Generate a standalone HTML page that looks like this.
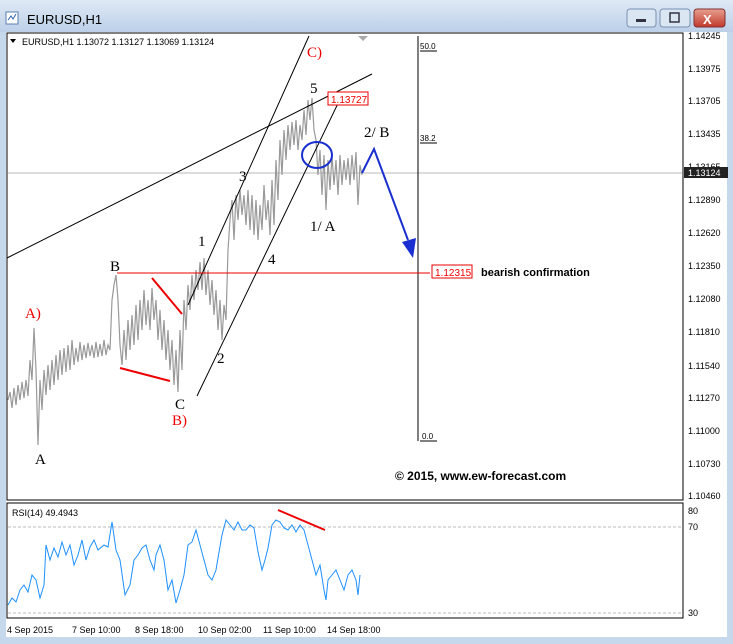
<!DOCTYPE html>
<html><head><meta charset="utf-8"><style>
body{margin:0;width:733px;height:644px;overflow:hidden;background:#c6d8ec;font-family:"Liberation Sans",sans-serif}
svg{display:block}
</style></head><body>
<svg width="733" height="644" xmlns="http://www.w3.org/2000/svg" font-family="Liberation Sans, sans-serif">
<defs><linearGradient id="tb" x1="0" y1="0" x2="0" y2="1"><stop offset="0" stop-color="#dfe9f5"/><stop offset="1" stop-color="#bcd0e8"/></linearGradient>
<linearGradient id="cl" x1="0" y1="0" x2="0" y2="1"><stop offset="0" stop-color="#e8a090"/><stop offset="1" stop-color="#c0392b"/></linearGradient></defs>
<rect x="0" y="0" width="733" height="644" fill="#c6d8ec"/>
<rect x="0" y="0" width="733" height="32" fill="url(#tb)"/>
<rect x="6" y="12" width="12" height="12" fill="#fff" stroke="#5a7fb0"/>
<path d="M8 20l3-4 2 3 3-5" stroke="#3060b0" fill="none"/>
<text x="27" y="24" font-size="13" fill="#000">EURUSD,H1</text>
<rect x="627" y="9" width="29" height="18" rx="3" fill="#dbe6f3" stroke="#7890b0"/>
<rect x="636" y="19" width="10" height="3" fill="#334"/>
<rect x="660" y="9" width="30" height="18" rx="3" fill="#dbe6f3" stroke="#7890b0"/>
<rect x="670" y="13" width="9" height="9" fill="none" stroke="#334" stroke-width="1.5"/>
<rect x="694" y="9" width="31" height="18" rx="3" fill="url(#cl)" stroke="#803030"/>
<text x="703" y="24" font-size="13" font-weight="bold" fill="#fff">X</text>
<rect x="6" y="32" width="721" height="605" fill="#fff"/>
<rect x="7" y="33" width="676" height="467" fill="none" stroke="#000"/>
<rect x="7" y="503" width="676" height="115" fill="none" stroke="#000"/>
<g font-size="9" fill="#000">
<text x="688" y="39">1.14245</text><text x="688" y="72">1.13975</text><text x="688" y="104">1.13705</text><text x="688" y="137">1.13435</text><text x="688" y="170">1.13165</text><text x="688" y="203">1.12890</text><text x="688" y="236">1.12620</text><text x="688" y="269">1.12350</text><text x="688" y="302">1.12080</text><text x="688" y="335">1.11810</text><text x="688" y="369">1.11540</text><text x="688" y="401">1.11270</text><text x="688" y="434">1.11000</text><text x="688" y="467">1.10730</text><text x="688" y="499">1.10460</text>
<text x="688" y="514">80</text><text x="688" y="530">70</text><text x="688" y="616">30</text>
<text x="7" y="633">4 Sep 2015</text><text x="72" y="633">7 Sep 10:00</text><text x="135" y="633">8 Sep 18:00</text><text x="198" y="633">10 Sep 02:00</text><text x="263" y="633">11 Sep 10:00</text><text x="327" y="633">14 Sep 18:00</text>
<text x="12" y="516">RSI(14) 49.4943</text>
<text x="22" y="45">EURUSD,H1  1.13072 1.13127 1.13069 1.13124</text>
</g>
<path d="M10 39l3 4 3-4z" fill="#000"/>
<path d="M358 36l5 5 5-5z" fill="#aaa"/>
<line x1="8" y1="527" x2="682" y2="527" stroke="#bbb" stroke-dasharray="3,2"/>
<line x1="8" y1="613" x2="682" y2="613" stroke="#bbb" stroke-dasharray="3,2"/>
<line x1="8" y1="173" x2="682" y2="173" stroke="#bbb"/>
<rect x="684" y="167" width="44" height="11" fill="#222"/><text x="688" y="176" font-size="9" fill="#fff">1.13124</text>
<line x1="418" y1="36" x2="418" y2="441" stroke="#000"/>
<g font-size="8" fill="#000"><text x="420" y="49">50.0</text><text x="420" y="141">38.2</text><text x="422" y="439">0.0</text></g>
<line x1="420" y1="51" x2="437" y2="51" stroke="#000"/><line x1="420" y1="143" x2="437" y2="143" stroke="#000"/><line x1="420" y1="441" x2="437" y2="441" stroke="#000"/>
<polyline fill="none" stroke="#999" stroke-width="1.2" points="8,400 10,392 12,408 14,388 16,405 18,385 20,400 22,382 24,398 26,380 28,396 30,360 32,380 34,328 36,370 38,445 40,380 42,410 44,370 46,395 48,365 50,390 52,360 54,385 56,355 58,380 60,350 62,375 64,348 66,372 68,345 70,370 72,340 74,365 76,348 78,362 80,342 82,360 84,345 86,358 88,343 90,356 92,345 94,358 96,342 98,357 100,344 102,356 104,340 106,355 108,345 110,350 112,300 114,285 116,275 118,300 120,345 122,365 124,330 126,360 128,320 130,350 132,315 134,345 136,305 138,340 140,300 142,330 144,290 146,325 148,300 150,330 152,288 154,320 156,300 158,340 160,310 162,350 164,320 166,360 168,330 170,370 172,340 174,385 176,350 178,392 180,330 182,370 184,300 186,330 188,285 190,310 192,275 194,300 196,270 198,290 200,262 202,290 204,258 206,295 208,270 210,305 212,280 214,315 216,290 218,330 220,300 222,340 224,305 226,320 228,250 230,220 232,200 234,240 236,195 238,220 240,190 242,215 244,195 246,225 248,190 250,230 252,195 254,235 256,200 258,240 260,205 262,230 264,185 266,220 268,200 270,235 272,180 274,225 276,160 278,200 280,140 282,175 284,130 286,160 288,125 290,150 292,122 294,145 296,120 298,150 300,125 302,140 304,110 306,135 308,100 310,120 312,98 314,130 316,140 318,175 320,150 322,195 324,155 326,210 328,160 330,190 332,155 334,185 336,160 338,195 340,155 342,185 344,160 346,180 348,158 350,185 352,155 354,180 356,152 358,205 360,165 362,175"/>
<line x1="188" y1="305" x2="309" y2="36" stroke="#000"/>
<line x1="197" y1="396" x2="343" y2="93" stroke="#000"/>
<line x1="7" y1="258" x2="372" y2="74" stroke="#000"/>
<line x1="117" y1="273" x2="430" y2="273" stroke="#e00" />
<line x1="152" y1="278" x2="182" y2="314" stroke="#e00" stroke-width="2"/>
<line x1="120" y1="368" x2="170" y2="381" stroke="#e00" stroke-width="2"/>
<rect x="328" y="92" width="40" height="13" fill="#fff" stroke="#e00"/><text x="331" y="103" font-size="10" fill="#e00">1.13727</text>
<rect x="432" y="265" width="40" height="13" fill="#fff" stroke="#e00"/><text x="435" y="276" font-size="10" fill="#e00">1.12315</text>
<text x="481" y="276" font-size="11" font-weight="bold">bearish confirmation</text>
<ellipse cx="317" cy="155" rx="15" ry="13" fill="none" stroke="#1a2fd0" stroke-width="2"/>
<polyline points="362,173 374,149 408,240" fill="none" stroke="#1a2fd0" stroke-width="2"/>
<path d="M402 242l14 -4 -3 20z" fill="#1a2fd0"/>
<g font-family="Liberation Serif, serif" font-size="15">
<text x="307" y="57" fill="#e00">C)</text><text x="310" y="93">5</text><text x="239" y="181">3</text><text x="198" y="246">1</text><text x="268" y="264">4</text><text x="217" y="363">2</text><text x="110" y="271">B</text><text x="25" y="318" fill="#e00">A)</text><text x="175" y="409">C</text><text x="172" y="425" fill="#e00">B)</text><text x="35" y="464">A</text><text x="310" y="231">1/ A</text><text x="364" y="137">2/ B</text>
</g>
<text x="395" y="480" font-size="12" font-weight="bold">© 2015, www.ew-forecast.com</text>
<polyline fill="none" stroke="#1e90ff" points="8,605 12,598 16,602 20,590 24,585 28,592 32,575 36,580 40,598 44,585 46,545 50,560 54,548 58,557 62,542 66,555 70,545 74,565 78,555 82,540 86,560 90,547 94,540 98,550 104,545 108,547 112,522 116,550 120,560 125,595 130,585 134,560 138,555 142,548 146,545 150,560 154,570 156,555 160,545 164,560 168,590 172,580 176,603 180,590 184,575 188,545 192,542 196,530 200,545 204,560 208,575 212,580 216,570 218,558 222,535 226,520 230,525 234,530 238,522 242,530 246,530 250,525 254,528 258,552 262,570 265,560 268,548 272,525 276,520 280,522 284,528 288,530 292,525 296,532 300,525 304,530 308,545 312,560 316,575 320,565 324,590 326,600 328,580 332,575 336,570 340,580 344,590 348,575 352,570 356,580 358,595 360,575"/>
<line x1="278" y1="510" x2="325" y2="530" stroke="#e00" stroke-width="2"/>
</svg>
</body></html>
